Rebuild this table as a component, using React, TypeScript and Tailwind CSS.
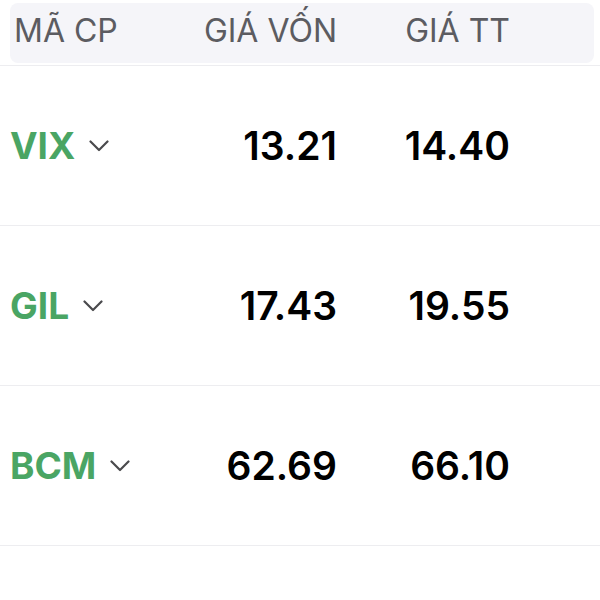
import React from 'react';

interface Holding {
  code: string;
  cost: string;
  price: string;
}

const holdings: Holding[] = [
  { code: 'VIX', cost: '13.21', price: '14.40' },
  { code: 'GIL', cost: '17.43', price: '19.55' },
  { code: 'BCM', cost: '62.69', price: '66.10' },
];

const Chevron: React.FC = () => (
  <svg width="20" height="12" viewBox="0 0 20 12" fill="none" className="shrink-0">
    <path d="M1.5 1.5 L10 10 L18.5 1.5" stroke="#4a4a4d" strokeWidth="2.2" strokeLinecap="round" strokeLinejoin="round" />
  </svg>
);

const App: React.FC = () => {
  return (
    <div className="w-[600px] h-[600px] bg-white overflow-hidden font-[Inter,'Liberation_Sans',sans-serif]">
      {/* Tiêu đề bảng */}
      <div className="pt-[3px] pl-[10px] pr-[6px] pb-[2px] border-b border-[#ededf0]">
        <div className="h-[60px] bg-[#f5f5f9] rounded-lg grid grid-cols-[190px_137px_173px] items-center text-[32px] text-[#5c5c61] pb-[4px]">
          <span className="pl-[4px]">MÃ CP</span>
          <span className="text-right">GIÁ VỐN</span>
          <span className="text-right">GIÁ TT</span>
        </div>
      </div>

      {/* Danh sách cổ phiếu */}
      {holdings.map((h) => (
        <div
          key={h.code}
          className="h-[160px] pl-[10px] grid grid-cols-[190px_137px_173px] items-center border-b border-[#ededf0]"
        >
          <div className="flex items-center gap-[14px]">
            <span className="text-[37px] font-bold text-[#4aa564] leading-none">{h.code}</span>
            <Chevron />
          </div>
          <span className="text-right text-[39px] font-semibold text-black leading-none">{h.cost}</span>
          <span className="text-right text-[39px] font-semibold text-black leading-none">{h.price}</span>
        </div>
      ))}
    </div>
  );
};

export default App;
